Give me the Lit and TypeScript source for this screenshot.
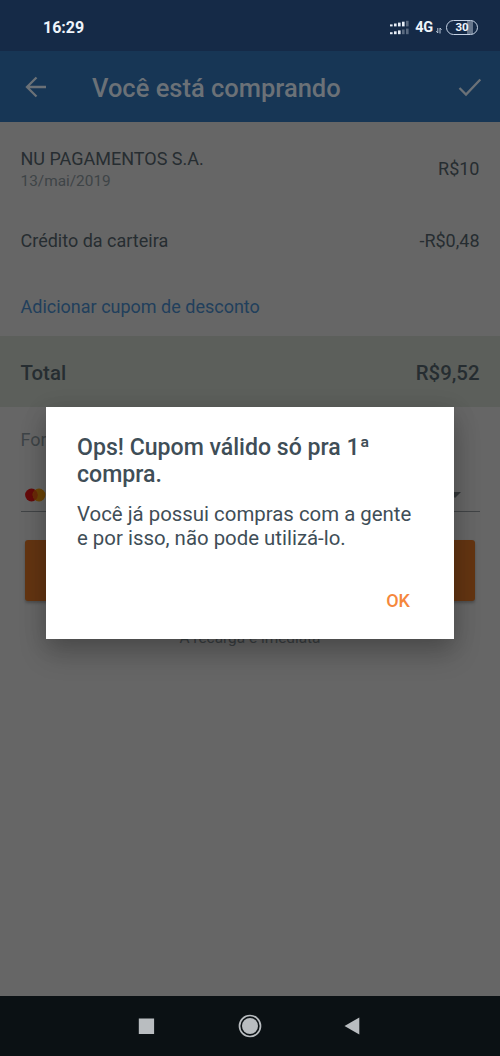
import { LitElement, html, css, svg } from "lit";
import { customElement } from "lit/decorators.js";

const bars = (y: number, lit: number) =>
  [0, 1, 2, 3, 4].map(
    (i) => svg`<rect x=${i * 4} y=${y - 2 - i * 0.9} width="2.6" height=${2 + i * 0.9}
      fill=${i < lit ? "#e6edf6" : "#5a6a80"} />`
  );

@customElement("status-bar")
class StatusBar extends LitElement {
  static styles = css`
    :host { display: flex; align-items: center; height: 51px; padding: 3px 22px 0 43px; box-sizing: border-box; background: #152a47; color: #eef4fb; font-weight: 700; }
    .time { flex: 1; font-size: 16px; }
    .signal { margin-right: 6px; }
    .net { font-size: 14.5px; letter-spacing: -0.2px; }
    .arrows { margin: 6px 4px 0 3px; }
    .battery { box-sizing: border-box; width: 32px; height: 15px; border: 1.5px solid #c5d2e4; border-radius: 8px; overflow: hidden; background: linear-gradient(90deg, #152a47 66%, #66768c 66%, #66768c 88%, #152a47 88%); font-size: 11.5px; line-height: 13.5px; text-align: center; }
  `;
  render() {
    return html`
      <span class="time">16:29</span>
      <svg class="signal" width="19" height="15" viewBox="0 0 19 15">${bars(6.4, 4)}${bars(14.2, 3)}</svg>
      <span class="net">4G</span>
      <svg class="arrows" width="6" height="7" viewBox="0 0 6 7" fill="none" stroke="#b9c6d8" stroke-width="1">
        <path d="M.3 4.200 1.800 6V1M4 6.500V1l1.500 1.800" />
      </svg>
      <span class="battery">30</span>
    `;
  }
}

@customElement("app-bar")
class AppBar extends LitElement {
  static styles = css`
    :host { display: flex; align-items: center; height: 71px; padding: 3px 18px 0 25px; box-sizing: border-box; background: #173655; color: #6b7177; }
    .title { flex: 1; margin-left: 45px; font-size: 25.5px; font-weight: 500; }
    svg { margin-top: -3px; fill: none; stroke: #6b7177; stroke-width: 2.3; }
  `;
  render() {
    return html`
      <svg width="22" height="22" viewBox="0 0 22 22"><path d="M21 11H2M11.500 1.500 2 11l9.500 9.500" /></svg>
      <span class="title">Você está comprando</span>
      <svg width="24" height="20" viewBox="0 0 24 20"><path d="M1.500 11 8 17.500 22.300 2.500" /></svg>
    `;
  }
}

@customElement("nav-bar")
class NavBar extends LitElement {
  static styles = css`
    :host { display: flex; align-items: center; justify-content: center; gap: 79px; height: 60px; background: #0b1114; }
    svg { display: block; width: 24px; height: 24px; fill: #b9bdc0; }
  `;
  render() {
    return html`
      <svg viewBox="0 0 24 24"><rect x="3.800" y="4.500" width="15.300" height="15.500" /></svg>
      <svg viewBox="0 0 24 24"><circle cx="12" cy="12" r="10.500" fill="none" stroke="#b9bdc0" stroke-width="1.700" /><circle cx="12" cy="12" r="8" /></svg>
      <svg viewBox="0 0 24 24"><path d="M18.300 3.500v17L3.500 12Z" /></svg>
    `;
  }
}

@customElement("alert-dialog")
class AlertDialog extends LitElement {
  static styles = css`
    :host { display: flex; flex-direction: column; box-sizing: border-box; padding: 27px 31px 0; background: #fff; color: #3f4e57; box-shadow: 0 15px 26px rgba(0, 0, 0, 0.2), 0 4px 22px rgba(0, 0, 0, 0.13); }
    h2 { margin: 0; font-size: 23.1px; line-height: 27px; font-weight: 500; white-space: nowrap; }
    p { margin: 14px 0 0; font-size: 20.4px; line-height: 24px; white-space: nowrap; }
    .ok { align-self: flex-end; margin: 39px 13px 0 0; font-size: 18px; line-height: 24px; font-weight: 500; color: #f5873c; }
  `;
  render() {
    return html`
      <h2>Ops! Cupom válido só pra 1ª<br />compra.</h2>
      <p>Você já possui compras com a gente<br />e por isso, não pode utilizá-lo.</p>
      <span class="ok">OK</span>
    `;
  }
}

@customElement("app-root")
class AppRoot extends LitElement {
  static styles = css`
    :host { display: flex; flex-direction: column; position: relative; width: 500px; height: 1056px; overflow: hidden; background: #666; color: #262d31; font-family: Roboto, "Noto Sans", sans-serif; font-size: 18px; }
    main { flex: 1; display: flex; flex-direction: column; }
    .row { display: flex; align-items: center; justify-content: space-between; box-sizing: border-box; padding: 0 20.5px; }
    .item { height: 94px; }
    .amount { margin-top: -1px; }
    .name { margin-top: 2px; line-height: 22px; }
    .date { font-size: 15.4px; line-height: 22px; color: #3e4447; }
    .credit { height: 48px; }
    .coupon { height: 72px; padding-top: 12px; color: #213f5c; }
    .total { height: 71px; padding-top: 2px; background: #5c5f5b; font-size: 20.4px; font-weight: 500; }
    .label { height: 64px; color: #3e4447; }
    .select { height: 41px; margin: 0 20.5px; padding: 7px 19px 0 4.5px; border-bottom: 1.5px solid #414446; }
    .pay { height: 61px; margin: 28px 25px 0; border-radius: 3px; background: #643512; box-shadow: 0 2px 3px rgba(0, 0, 0, 0.25); }
    .note { margin-top: 27px; text-align: center; font-size: 15.4px; line-height: 20px; color: #3a3f42; }
    alert-dialog { position: absolute; left: 46px; top: 407px; width: 408px; height: 232px; }
  `;
  render() {
    return html`
      <status-bar></status-bar>
      <app-bar></app-bar>
      <main>
        <div class="row item">
          <div><div class="name">NU PAGAMENTOS S.A.</div><div class="date">13/mai/2019</div></div>
          <span class="amount">R$10</span>
        </div>
        <div class="row credit"><span>Crédito da carteira</span><span>-R$0,48</span></div>
        <div class="row coupon">Adicionar cupom de desconto</div>
        <div class="row total"><span>Total</span><span>R$9,52</span></div>
        <div class="row label">Forma de pagamento</div>
        <div class="row select">
          <svg width="22" height="14" viewBox="0 0 22 14">
            <circle cx="6.500" cy="7" r="6.400" fill="#650b0b" />
            <circle cx="14" cy="7" r="6.400" fill="#6c4507" />
            <path d="M10.250 2a6.200 6.200 0 0 1 0 10 6.200 6.200 0 0 1 0-10Z" fill="#6b2908" />
          </svg>
          <svg width="12" height="6" viewBox="0 0 12 6"><path d="M0 0h12L6 6Z" fill="#333638" /></svg>
        </div>
        <div class="pay"></div>
        <div class="note">A recarga é imediata</div>
      </main>
      <nav-bar></nav-bar>
      <alert-dialog></alert-dialog>
    `;
  }
}
